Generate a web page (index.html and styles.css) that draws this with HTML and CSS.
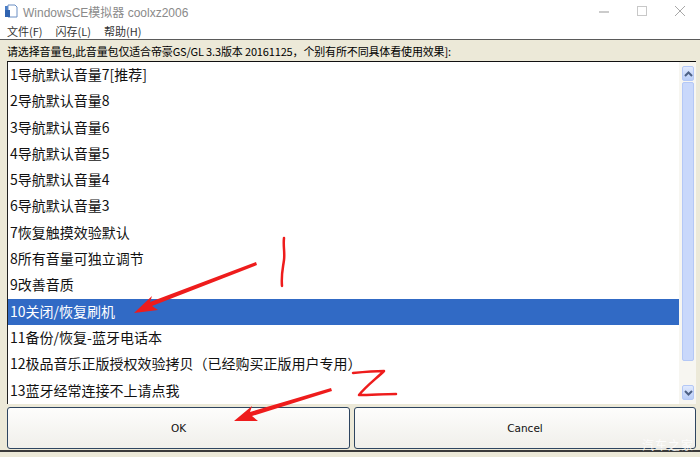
FILE: index.html
```html
<!DOCTYPE html>
<html lang="zh-CN">
  <head>
    <meta charset="UTF-8" />
    <title>WindowsCE模拟器 coolxz2006</title>
    <link rel="stylesheet" href="styles.css">
  </head>
  <body>
    <div class="window">
      <div class="titlebar">
        <svg class="app-icon" width="14" height="14" viewBox="0 0 14 14">
          <rect x="1" y="2" width="11" height="11" fill="#4b7fc8" />
          <path d="M4 1h7l2 2v10H4z" fill="#fff" stroke="#6a8fc4" stroke-width="1" />
          <rect x="1" y="6" width="5" height="7" fill="#2f63b0" />
        </svg>
        <span class="title">WindowsCE模拟器 coolxz2006</span>
        <div class="controls">
          <svg width="12" height="12" viewBox="0 0 12 12"><path d="M1 7h10" stroke="#a8a8a8" stroke-width="1.2" /></svg>
          <svg width="12" height="12" viewBox="0 0 12 12"><rect x="1.5" y="1.5" width="9" height="9" fill="none" stroke="#c8c8c8" /></svg>
          <svg width="12" height="12" viewBox="0 0 12 12"><path d="M1 1l10 10M11 1L1 11" stroke="#a8a8a8" stroke-width="1" /></svg>
        </div>
      </div>

      <div class="menubar">
        <span>文件(F)</span>
        <span>闪存(L)</span>
        <span>帮助(H)</span>
      </div>

      <div class="client">
        <div class="prompt">请选择音量包,此音量包仅适合帝豪GS/GL 3.3版本 20161125，个别有所不同具体看使用效果]:</div>

        <div class="listbox">
          <ul class="items">
            <li>1导航默认音量7[推荐]</li>
            <li>2导航默认音量8</li>
            <li>3导航默认音量6</li>
            <li>4导航默认音量5</li>
            <li>5导航默认音量4</li>
            <li>6导航默认音量3</li>
            <li>7恢复触摸效验默认</li>
            <li>8所有音量可独立调节</li>
            <li>9改善音质</li>
            <li class="selected">10关闭/恢复刷机</li>
            <li>11备份/恢复-蓝牙电话本</li>
            <li>12极品音乐正版授权效验拷贝（已经购买正版用户专用）</li>
            <li>13蓝牙经常连接不上请点我</li>
          </ul>
          <div class="scrollbar">
            <div class="sb-btn">
              <svg width="9" height="6" viewBox="0 0 9 6"><path d="M1 5l3.5-3.5L8 5" fill="none" stroke="#4d6185" stroke-width="2" /></svg>
            </div>
            <div class="sb-thumb"></div>
            <div class="sb-btn">
              <svg width="9" height="6" viewBox="0 0 9 6"><path d="M1 1l3.5 3.5L8 1" fill="none" stroke="#4d6185" stroke-width="2" /></svg>
            </div>
          </div>
        </div>

        <div class="buttons">
          <button type="button">OK</button>
          <button type="button">Cancel</button>
        </div>
      </div>
      <div class="statusline"></div>

      <!-- red marks drawn on the screenshot -->
      <svg class="marks" width="700" height="457" viewBox="0 0 700 457">
        <path d="M284 238c-1 8 1 14 0 22c-1 8-3 14-2 26" fill="none" stroke="#ee1c1c" stroke-width="2.5" stroke-linecap="round" />
        <path d="M256 262L150 302L152 296L134 313L158 310L152 306L257 265z" fill="#ee1c1c" />
        <path d="M353 373c10-1 22-2 31-2c-7 7-18 15-25 24c12 0 25-1 37-1" fill="none" stroke="#ee1c1c" stroke-width="2.5" stroke-linecap="round" stroke-linejoin="round" />
        <path d="M331 388L250 412L252 406L234 421L258 421L252 416L332 391z" fill="#ee1c1c" />
      </svg>
      <span class="watermark">汽车之家</span>
    </div>
  </body>
</html>
```

FILE: styles.css
```css
body {
  margin: 0;
  padding: 0;
  background: #fff;
  font-family: "Noto Sans CJK SC", "Noto Sans", sans-serif;
}
.window {
  position: relative;
  width: 700px;
  height: 457px;
  overflow: hidden;
  display: flex;
  flex-direction: column;
  background: #fff;
}
.titlebar {
  height: 22px;
  display: flex;
  align-items: center;
  padding-left: 4px;
}
.app-icon {
  margin-right: 5px;
}
.title {
  font-family: "Liberation Sans", "Noto Sans CJK SC", sans-serif;
  font-size: 12px;
  color: #8a8a8a;
}
.controls {
  margin-left: auto;
  display: flex;
  gap: 26px;
  padding-right: 14px;
}
.menubar {
  height: 17px;
  display: flex;
  align-items: center;
  gap: 13px;
  padding-left: 7px;
  font-size: 11px;
  color: #333;
}
.client {
  flex: 1;
  background: #ece9d8;
  border-top: 1px solid #5a5a5a;
  padding: 0 4px 0 7px;
  display: flex;
  flex-direction: column;
}
.prompt {
  height: 21px;
  line-height: 22px;
  font-size: 11px;
  letter-spacing: -0.15px;
  color: #000;
  white-space: nowrap;
}
.listbox {
  height: 342px;
  display: flex;
  background: #fff;
  border-top: 1px solid #111;
  border-left: 1px solid #222;
}
.items {
  flex: 1;
  margin: 0;
  padding: 0;
  list-style: none;
}
.items li {
  height: 26.3px;
  line-height: 24px;
  padding-left: 2px;
  font-size: 14px;
  color: #111;
  white-space: nowrap;
}
.items li.selected {
  background: #316ac5;
  color: #fff;
}
.scrollbar {
  width: 17px;
  box-sizing: border-box;
  padding: 4px 2px 4px 3px;
  background: #f7f6f1;
  display: flex;
  flex-direction: column;
  gap: 1px;
}
.sb-btn {
  height: 13px;
  display: flex;
  align-items: center;
  justify-content: center;
  background: linear-gradient(to bottom, #e1eafe, #b9cdf7);
  border: 1px solid #b4c8f6;
  border-radius: 2px;
}
.sb-thumb {
  flex: 1;
  margin-bottom: 23px;
  background: #c9d8fb;
  border: 1px solid #b4c8f6;
  border-radius: 2px;
}
.buttons {
  display: grid;
  grid-template-columns: 343px 1fr;
  gap: 4px;
  margin-top: 3px;
}
.buttons button {
  height: 42px;
  border: 1px solid #2e4560;
  border-radius: 3px;
  background: linear-gradient(to bottom, #fdfdfc, #f0efea);
  font-family: "DejaVu Sans", sans-serif;
  font-size: 10.5px;
  color: #111;
}
.statusline {
  height: 5px;
  background: #ece9d8;
  border-top: 2px solid #3a3a3a;
}
.marks {
  position: absolute;
  left: 0;
  top: 0;
  pointer-events: none;
}
.watermark {
  position: absolute;
  right: 6px;
  bottom: 4px;
  font-size: 12px;
  color: rgba(255, 255, 255, 0.85);
  letter-spacing: 1px;
}
```
